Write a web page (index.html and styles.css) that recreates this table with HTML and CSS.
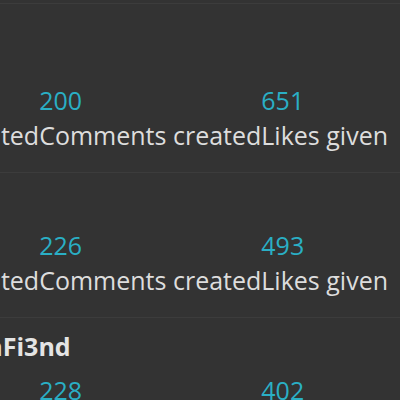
FILE: index.html
```html
<!DOCTYPE html>
<html lang="en">
<head>
  <meta charset="UTF-8" />
  <meta name="viewport" content="width=device-width, initial-scale=1.0" />
  <title>Leaderboard</title>
  <link rel="stylesheet" href="styles.css">
</head>
<body>
  <div class="topbar"></div>

  <div class="board">
    <div class="row">
      <div class="entry">
        <div class="user">Ghost</div>
        <div class="stats">
          <div class="stat"><span class="num">134</span><span class="label">Posts created</span></div>
          <div class="stat"><span class="num">200</span><span class="label">Comments created</span></div>
          <div class="stat"><span class="num">651</span><span class="label">Likes given</span></div>
        </div>
      </div>
    </div>

    <div class="row">
      <div class="entry">
        <div class="user">mira_k</div>
        <div class="stats">
          <div class="stat"><span class="num">97</span><span class="label">Posts created</span></div>
          <div class="stat"><span class="num">226</span><span class="label">Comments created</span></div>
          <div class="stat"><span class="num">493</span><span class="label">Likes given</span></div>
        </div>
      </div>
    </div>

    <div class="row">
      <div class="entry">
        <div class="user">ItsDemonFi3nd</div>
        <div class="stats">
          <div class="stat"><span class="num">88</span><span class="label">Posts created</span></div>
          <div class="stat"><span class="num">228</span><span class="label">Comments created</span></div>
          <div class="stat"><span class="num">402</span><span class="label">Likes given</span></div>
        </div>
      </div>
    </div>
  </div>
</body>
</html>
```

FILE: styles.css
```css
:root {
  --bg: #333333;
  --line: #3c3c3c;
  --text: #dddddd;
  --user: #e4e4e4;
  --accent: #2aafc5;
}

body {
  margin: 0;
  background: var(--bg);
  color: var(--text);
  font-family: 'Open Sans', 'Noto Sans', sans-serif;
  font-size: 25px;
  overflow: hidden;
}

.topbar {
  height: 3px;
  border-bottom: 1px solid var(--line);
  margin-bottom: 24px;
}

.row {
  display: flex;
  justify-content: flex-end;
  padding: 11px 12px 19px 0;
  border-bottom: 1px solid var(--line);
}

.entry {
  display: flex;
  flex-direction: column;
  flex-shrink: 0;
}

.user {
  font-weight: 700;
  color: var(--user);
  line-height: 35px;
  margin-bottom: 9px;
  white-space: nowrap;
}

.stats {
  display: flex;
}

.stat {
  display: flex;
  flex-direction: column;
  white-space: nowrap;
}

.num {
  color: var(--accent);
  line-height: 35px;
}

.label {
  line-height: 35px;
}
```
